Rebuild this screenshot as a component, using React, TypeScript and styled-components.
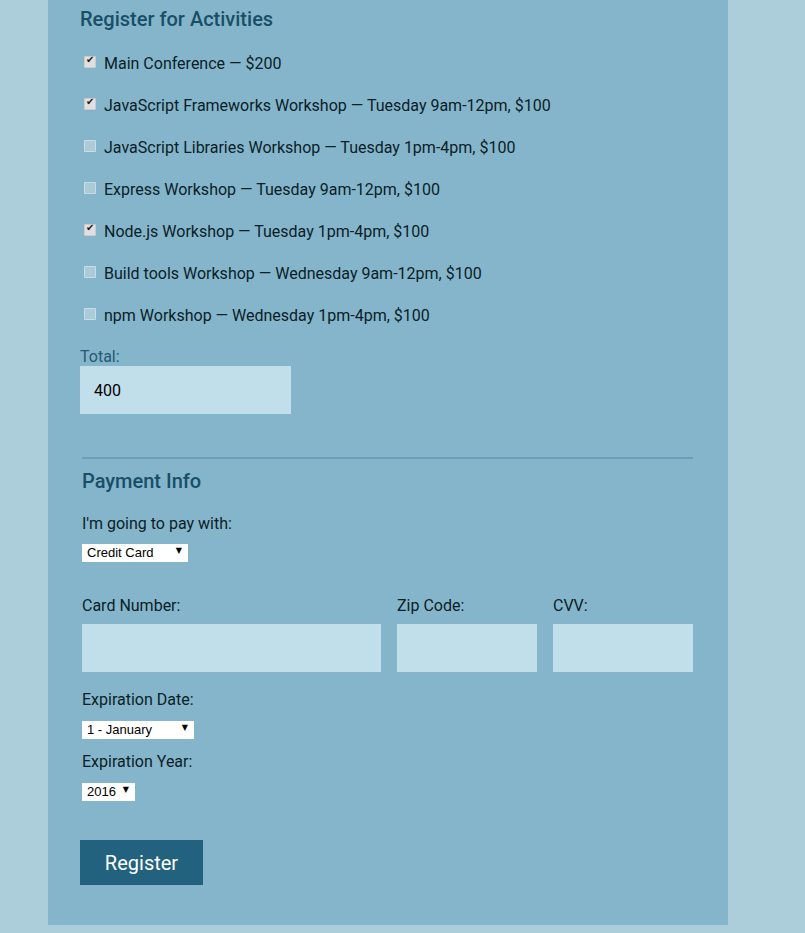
import React from "react";
import styled, { createGlobalStyle } from "styled-components";

const GlobalStyle = createGlobalStyle`
  html, body { margin: 0; padding: 0; }
  body {
    background: #accdda;
    font-family: Roboto, "Liberation Sans", sans-serif;
    min-height: 933px;
  }
`;

const Container = styled.form`
  width: 680px;
  margin-left: 48px;
  background: #85b5ca;
  padding: 8px 32px 40px 32px;
  box-sizing: border-box;
`;

const Legend = styled.h2`
  margin: 0;
  font-size: 20px;
  line-height: 23px;
  font-weight: 500;
  color: #184f68;
`;

const Activities = styled.div`
  display: flex;
  flex-direction: column;
  margin-top: 11px;
`;

const ActivityRow = styled.label`
  display: flex;
  align-items: center;
  height: 42px;
  font-size: 16px;
  color: #0a1e28;
  gap: 8px;
  padding-left: 4px;
`;

const Check = styled.input.attrs({ type: "checkbox" })`
  appearance: none;
  margin: 0;
  width: 12px;
  height: 12px;
  box-sizing: border-box;
  border: 1px solid rgba(255, 255, 255, 0.35);
  background: rgba(220, 230, 235, 0.45);
  border-radius: 1px;
  position: relative;
  top: -1px;
  &:checked {
    background: #e0e0e0;
    border-color: #cccccc;
  }
  &:checked::after {
    content: "✔";
    position: absolute;
    left: 1px;
    top: -3px;
    font-size: 10px;
    color: #1a1a1a;
    font-family: "DejaVu Sans", sans-serif;
  }
`;

const TotalLabel = styled.div`
  margin-top: 11px;
  font-size: 16px;
  line-height: 19px;
  color: #245a72;
`;

const TotalInput = styled.input`
  display: block;
  width: 211px;
  height: 48px;
  box-sizing: border-box;
  border: none;
  outline: none;
  background: #c1deeb;
  padding: 0 14px;
  font-family: Roboto, "Liberation Sans", sans-serif;
  font-size: 16px;
  color: #000;
`;

const Divider = styled.hr`
  margin: 43px 0 0 2px;
  width: 611px;
  border: none;
  border-top: 2px solid #6b9fb5;
`;

const Payment = styled.section`
  padding-left: 2px;
  padding-top: 11px;
`;

const FieldLabel = styled.div<{ $top: number }>`
  margin-top: ${(p) => p.$top}px;
  font-size: 16px;
  line-height: 19px;
  color: #0a1e28;
`;

const SelectWrap = styled.span<{ $width: number; $top: number }>`
  display: block;
  position: relative;
  width: ${(p) => p.$width}px;
  height: 18px;
  margin-top: ${(p) => p.$top}px;
  &::after {
    content: "▼";
    position: absolute;
    right: 6px;
    top: 4px;
    font-size: 8px;
    line-height: 10px;
    color: #000;
    pointer-events: none;
    font-family: "DejaVu Sans", sans-serif;
  }
`;

const Select = styled.select`
  appearance: none;
  width: 100%;
  height: 18px;
  box-sizing: border-box;
  border: none;
  border-radius: 0;
  background: #fff;
  padding: 0 0 0 5px;
  font-family: Arial, "Liberation Sans", sans-serif;
  font-size: 13px;
  color: #000;
  outline: none;
`;

const CardRow = styled.div`
  display: grid;
  grid-template-columns: 299px 140px 140px;
  column-gap: 16px;
  margin-top: 36px;
`;

const CardField = styled.div`
  display: flex;
  flex-direction: column;
  gap: 8px;
`;

const CardLabel = styled.div`
  font-size: 16px;
  line-height: 20px;
  color: #0a1e28;
`;

const TextInput = styled.input`
  height: 48px;
  box-sizing: border-box;
  border: none;
  outline: none;
  background: #c1deeb;
  padding: 0 14px;
  font-size: 16px;
`;

const Button = styled.button`
  display: block;
  margin-top: 41px;
  width: 123px;
  height: 45px;
  border: none;
  background: #22627e;
  color: #fff;
  font-family: Roboto, "Liberation Sans", sans-serif;
  font-size: 20px;
  cursor: pointer;
`;

const activities = [
  { text: "Main Conference — $200", checked: true },
  { text: "JavaScript Frameworks Workshop — Tuesday 9am-12pm, $100", checked: true },
  { text: "JavaScript Libraries Workshop — Tuesday 1pm-4pm, $100", checked: false },
  { text: "Express Workshop — Tuesday 9am-12pm, $100", checked: false },
  { text: "Node.js Workshop — Tuesday 1pm-4pm, $100", checked: true },
  { text: "Build tools Workshop — Wednesday 9am-12pm, $100", checked: false },
  { text: "npm Workshop — Wednesday 1pm-4pm, $100", checked: false },
];

export default function App() {
  return (
    <>
      <GlobalStyle />
      <Container onSubmit={(e) => e.preventDefault()}>
        <Legend>Register for Activities</Legend>
        <Activities>
          {activities.map((a) => (
            <ActivityRow key={a.text}>
              <Check defaultChecked={a.checked} />
              <span>{a.text}</span>
            </ActivityRow>
          ))}
        </Activities>
        <TotalLabel>Total:</TotalLabel>
        <TotalInput defaultValue="400" />
        <Divider />
        <Payment>
          <Legend>Payment Info</Legend>
          <FieldLabel $top={21}>I'm going to pay with:</FieldLabel>
          <SelectWrap $width={106} $top={9}>
            <Select defaultValue="credit">
              <option value="credit">Credit Card</option>
              <option value="paypal">PayPal</option>
              <option value="bitcoin">Bitcoin</option>
            </Select>
          </SelectWrap>
          <CardRow>
            <CardField>
              <CardLabel>Card Number:</CardLabel>
              <TextInput />
            </CardField>
            <CardField>
              <CardLabel>Zip Code:</CardLabel>
              <TextInput />
            </CardField>
            <CardField>
              <CardLabel>CVV:</CardLabel>
              <TextInput />
            </CardField>
          </CardRow>
          <FieldLabel $top={18}>Expiration Date:</FieldLabel>
          <SelectWrap $width={112} $top={10}>
            <Select defaultValue="1">
              <option value="1">1 - January</option>
              <option value="2">2 - February</option>
            </Select>
          </SelectWrap>
          <FieldLabel $top={15}>Expiration Year:</FieldLabel>
          <SelectWrap $width={53} $top={10}>
            <Select defaultValue="2016">
              <option value="2016">2016</option>
              <option value="2017">2017</option>
            </Select>
          </SelectWrap>
        </Payment>
        <Button type="submit">Register</Button>
      </Container>
    </>
  );
}
